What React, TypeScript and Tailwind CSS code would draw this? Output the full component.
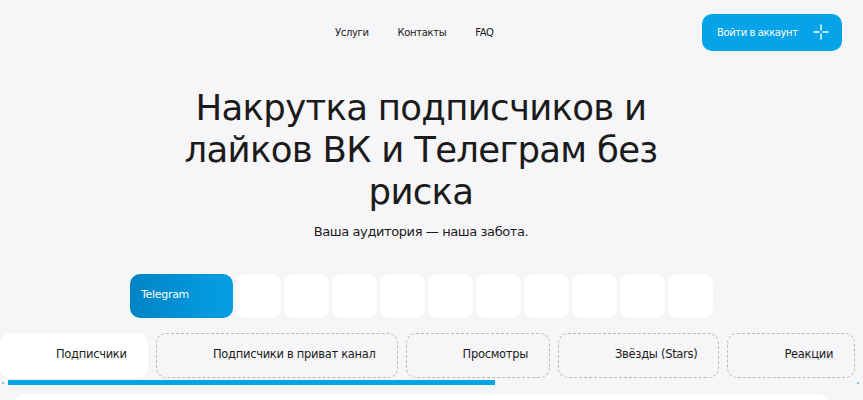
import React from "react";

export default function App() {
  const cats = [
    "Подписчики в приват канал",
    "Просмотры",
    "Звёзды (Stars)",
    "Реакции",
  ];
  return (
    <div className="w-[863px] h-[400px] overflow-hidden bg-[#f6f6f8] text-[#1b1b1b] font-['DejaVu_Sans',sans-serif]">
      <div className="w-[842px]">
        <header className="flex items-center h-[63px] pt-[1px]">
          <nav className="flex items-center gap-[29px] ml-[335px] text-[10px] tracking-[-0.35px]">
            <span>Услуги</span>
            <span>Контакты</span>
            <span>FAQ</span>
          </nav>
          <button className="ml-auto flex items-center h-[37px] w-[140px] rounded-[10px] bg-[#05a3e7] text-white text-[10px] pl-[15px] tracking-[-0.4px]">
            <span>Войти в аккаунт</span>
            <svg className="ml-auto mr-[13px]" width="16" height="16" viewBox="0 0 16 16" fill="none" stroke="white" strokeWidth="1.4" strokeLinecap="round">
              <path d="M8 1v5M8 10v5M1 8h5M10 8h5" />
            </svg>
          </button>
        </header>
        <h1 className="text-center text-[35.5px] leading-[42px] mt-[24px] tracking-[-0.7px]">
          Накрутка подписчиков и<br />лайков ВК и Телеграм без<br />риска
        </h1>
        <p className="text-center text-[13px] mt-[9px] tracking-[-0.4px]">Ваша аудитория — наша забота.</p>
        <div className="flex items-center gap-[3px] ml-[130px] mt-[32px]">
          <div className="w-[103px] h-[44px] rounded-[10px] bg-gradient-to-r from-[#0284c5] to-[#049fe6] text-white text-[11px] flex items-center pl-[11px] tracking-[-0.3px]">
            Telegram
          </div>
          {Array.from({ length: 10 }).map((_, i) => (
            <div key={i} className="w-[45px] h-[44px] rounded-[10px] bg-white" />
          ))}
        </div>
      </div>
      <div className="flex gap-[8px] mt-[15px] w-[1100px]">
        <div className="shrink-0 w-[148px] h-[45px] rounded-[10px] bg-white flex items-center pl-[56px] text-[11.5px] tracking-[-0.3px]">
          Подписчики
        </div>
        {cats.map((c) => (
          <div key={c} className="shrink-0 h-[45px] rounded-[10px] border border-dashed border-[#b9b9bd] flex items-center pl-[56px] pr-[21px] text-[11.5px] tracking-[-0.3px]">
            {c}
          </div>
        ))}
        <div className="shrink-0 w-[150px] h-[45px] rounded-[10px] border border-dashed border-[#b9b9bd]" />
      </div>
      <div className="relative h-[6px] mt-[2px]">
        <div className="absolute left-[2px] top-[2px] w-[2px] h-[2px] bg-[#7cc7ec]" />
        <div className="absolute left-[8px] top-0 w-[487px] h-[5px] bg-[#04a2e6]" />
        <div className="absolute left-[857px] top-[2px] w-[2px] h-[2px] bg-[#7cc7ec]" />
      </div>
      <div className="ml-[8px] mt-[8px] w-[827px] h-[40px] bg-white rounded-t-[20px]" />
    </div>
  );
}
